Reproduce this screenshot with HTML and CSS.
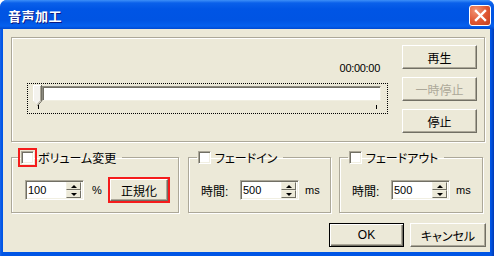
FILE: index.html
```html
<!DOCTYPE html>
<html lang="ja">

<head>
	<meta charset="UTF-8">
	<title>音声加工</title>
	<link rel="stylesheet" href="styles.css">
</head>

<body>
	<div class="window">
		<div class="titlebar">
			<span class="title">音声加工</span>
			<button class="close">
				<svg width="13" height="13" viewBox="0 0 13 13"><path d="M2 2 L11 11 M11 2 L2 11" stroke="#fff" stroke-width="2.4" stroke-linecap="square"/></svg>
			</button>
		</div>
		<div class="client">
			<div class="group player">
				<div class="seek">
					<div class="time num">00:00:00</div>
					<div class="slider">
						<div class="track"></div>
						<svg class="thumb" width="9" height="22" viewBox="0 0 9 22">
							<path d="M0.5 0.5 H8 V16 L4.5 20 L0.5 16 Z" fill="#f4f3ee"/>
							<path d="M0.5 16 V0.5 H8" fill="none" stroke="#fff"/>
							<path d="M8.5 0 V16.2 L4.5 20.8" fill="none" stroke="#716f64"/>
							<path d="M7.5 1 V15.8 L4.2 19.5" fill="none" stroke="#aca899"/>
						</svg>
						<span class="tick tick-start"></span>
						<span class="tick tick-end"></span>
					</div>
				</div>
				<div class="transport">
					<button class="btn">再生</button>
					<button class="btn" disabled>一時停止</button>
					<button class="btn">停止</button>
				</div>
			</div>

			<div class="effects">
				<fieldset class="group fx volume">
					<legend><span class="check marked"></span>ボリューム変更</legend>
					<div class="row">
						<div class="spin"><span class="value num">100</span><span class="arrows"><span class="arrow up"></span><span class="arrow down"></span></span></div>
						<span class="unit num">%</span>
						<button class="btn normalize marked">正規化</button>
					</div>
				</fieldset>
				<fieldset class="group fx fadein">
					<legend><span class="check"></span>フェードイン</legend>
					<div class="row">
						<span class="label">時間:</span>
						<div class="spin"><span class="value num">500</span><span class="arrows"><span class="arrow up"></span><span class="arrow down"></span></span></div>
						<span class="ms num">ms</span>
					</div>
				</fieldset>
				<fieldset class="group fx fadeout">
					<legend><span class="check"></span>フェードアウト</legend>
					<div class="row">
						<span class="label">時間:</span>
						<div class="spin"><span class="value num">500</span><span class="arrows"><span class="arrow up"></span><span class="arrow down"></span></span></div>
						<span class="ms num">ms</span>
					</div>
				</fieldset>
			</div>

			<div class="actions">
				<button class="btn default">OK</button>
				<button class="btn cancel">キャンセル</button>
			</div>
		</div>
	</div>
</body>

</html>
```

FILE: styles.css
```css
* {
	box-sizing: border-box;
}

html,
body {
	margin: 0;
	background: #fff;
}

body {
	font-family: "Liberation Sans", "Noto Sans CJK JP", sans-serif;
	font-size: 12px;
	font-feature-settings: "palt";
	color: #000;
}

.num {
	font-family: "Liberation Sans", sans-serif;
	font-size: 11px;
}

/* window frame */
.window {
	width: 494px;
	height: 256px;
	display: flex;
	flex-direction: column;
	padding: 0 4px 4px 3px;
	background: linear-gradient(to right, #1a64e8, #0055e5 2px, #0055e5 calc(100% - 3px), #0039b3);
	border-radius: 7px 7px 0 0;
}

.titlebar {
	height: 29px;
	flex: none;
	display: flex;
	align-items: center;
	margin: 0 -4px 0 -3px;
	padding: 1px 3px 0 8px;
	border-radius: 7px 7px 0 0;
	background: linear-gradient(#3d8ff8 0, #0a60ea 3px, #0055e5 9px, #0054e3 20px, #0560ee 26px, #0049d2 29px);
}

.title {
	flex: 1;
	color: #fff;
	font-family: "Noto Sans CJK JP", sans-serif;
	font-size: 13px;
	font-weight: bold;
	letter-spacing: 0.5px;
	text-shadow: 1px 1px #0a1883;
}

.close {
	width: 22px;
	height: 21px;
	padding: 0;
	display: grid;
	place-items: center;
	border: 1px solid #fff;
	border-radius: 3px;
	background: radial-gradient(circle at 30% 25%, #f29474, #df5632 55%, #c4401f);
}

.client {
	flex: 1;
	background: #ece9d8;
	padding: 8px 5px 0 8px;
}

/* group boxes */
.group {
	margin: 0;
	border: 1px solid #aca899;
	box-shadow: inset 1px 1px #fff, 1px 1px #fff;
}

.player {
	height: 105px;
	display: flex;
	gap: 14px;
	padding: 7px 7px 0 15px;
}

.seek {
	flex: 1;
	display: flex;
	flex-direction: column;
}

.time {
	margin-top: 16px;
	padding-right: 8px;
	line-height: 14px;
	text-align: right;
	letter-spacing: -0.3px;
}

.slider {
	position: relative;
	height: 31px;
	margin-top: 8px;
	border: 1px dotted #000;
}

.track {
	width: 339px;
	height: 15px;
	margin: 2px 0 0 14px;
	background: #fff;
	border: 1px solid;
	border-color: #8d8b80 #f1efe2 #f1efe2 #8d8b80;
	box-shadow: inset 1px 1px #716f64;
}

.thumb {
	position: absolute;
	left: 5px;
	top: 1px;
}

.tick {
	position: absolute;
	top: 21px;
	width: 1px;
	height: 4px;
	background: #000;
}

.tick-start {
	left: 10px;
}

.tick-end {
	left: 348px;
}

.transport {
	display: flex;
	flex-direction: column;
	gap: 8px;
}

/* push buttons */
.btn {
	width: 75px;
	height: 24px;
	padding: 0;
	font: inherit;
	color: #000;
	background: #ece9d8;
	border: 1px solid;
	border-color: #fff #716f64 #716f64 #fff;
	box-shadow: inset -1px -1px #aca899;
}

.btn:disabled {
	color: #aca899;
}

.btn.default {
	border-color: #000;
	box-shadow: inset 1px 1px #fff, inset -1px -1px #716f64, inset -2px -2px #aca899;
}

.btn.cancel {
	width: 76px;
}

.marked {
	outline: 2px solid #f51c1c;
}

/* bottom groups */
.effects {
	display: flex;
	margin-top: 8px;
}

.fx {
	height: 63px;
	padding: 0;
	min-width: 0;
}

.volume {
	width: 168px;
	margin-right: 9px;
}

.fadein {
	width: 143px;
	margin-right: 8px;
}

.fadeout {
	width: 144px;
}

legend {
	display: flex;
	align-items: center;
	gap: 4px;
	height: 15px;
	margin-left: 8px;
	padding: 0 6px 0 1px;
}

.check {
	width: 13px;
	height: 13px;
	background: #fff;
	border: 1px solid;
	border-color: #aca899 #fff #fff #aca899;
	box-shadow: inset 1px 1px #716f64, inset -1px -1px #f1efe2;
}

.check.marked {
	outline-offset: 1px;
}

.row {
	display: flex;
	align-items: center;
	height: 26px;
	margin-top: 12px;
	padding-left: 12px;
}

.volume .row {
	padding-left: 13px;
}

.label {
	width: 39px;
}

.spin {
	width: 59px;
	height: 20px;
	display: flex;
	background: #fff;
	border: 1px solid;
	border-color: #aca899 #fff #fff #aca899;
	box-shadow: inset 1px 1px #716f64, inset -1px -1px #f1efe2;
	padding: 1px 2px 1px 1px;
}

.value {
	flex: 1;
	padding-left: 1px;
	line-height: 16px;
}

.arrows {
	width: 15px;
	display: flex;
	flex-direction: column;
}

.arrow {
	flex: 1;
	display: grid;
	place-items: center;
	background: #ece9d8;
	border: 1px solid;
	border-color: #f1efe2 #716f64 #716f64 #f1efe2;
}

.arrow::before {
	content: "";
	border-left: 3px solid transparent;
	border-right: 3px solid transparent;
}

.up::before {
	border-bottom: 3px solid #000;
}

.down::before {
	border-top: 3px solid #000;
}

.unit {
	width: 10px;
	margin-left: 8px;
}

.normalize {
	width: 58px;
	height: 22px;
	margin-left: 8px;
}

.ms {
	margin-left: 6px;
}

.actions {
	display: flex;
	justify-content: flex-end;
	gap: 6px;
	margin: 10px -1px 0 0;
}
```
